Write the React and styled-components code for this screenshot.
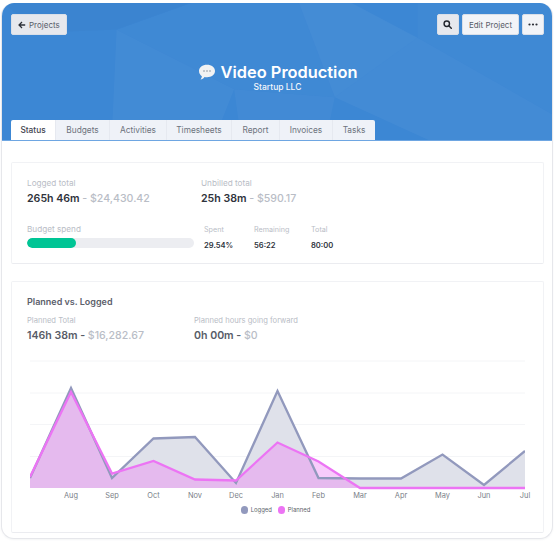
import React from "react";
import styled, { createGlobalStyle } from "styled-components";

const Global = createGlobalStyle`
  html, body { margin: 0; padding: 0; background: #fff; }
  body { font-family: "Inter", "Liberation Sans", sans-serif; }
  * { box-sizing: border-box; }
`;

const Page = styled.div`
  width: 556px;
  height: 553px;
  padding: 3px 3px 14px 1px;
`;

const Frame = styled.div`
  height: 536px;
  border: 1px solid #e6e7eb;
  border-top: 0;
  border-radius: 13px;
  overflow: hidden;
  display: flex;
  flex-direction: column;
  background: #fff;
  box-shadow: 0 1px 2px rgba(40, 50, 80, 0.05);
`;

const Header = styled.header`
  position: relative;
  height: 138px;
  flex: none;
  background: #3c87d4;
  display: flex;
  flex-direction: column;
  padding: 11px 8px 0 9px;
  border-bottom: 1px solid #6ea6e2;
`;

const Facets = styled.svg`
  position: absolute;
  inset: 0;
  width: 100%;
  height: 100%;
`;

const TopBar = styled.div`
  position: relative;
  display: flex;
  justify-content: space-between;
`;

const ButtonGroup = styled.div`
  display: flex;
  gap: 3px;
`;

const Button = styled.button`
  height: 21px;
  min-width: 22px;
  padding: 0 ${(p) => (p.$wide ? "6px" : "0")};
  display: flex;
  align-items: center;
  justify-content: center;
  gap: 3px;
  border: 1px solid #d9dfe8;
  border-radius: 2px;
  background: ${(p) => (p.$dim ? "#e6e8ed" : "#f2f4f8")};
  color: #585d68;
  font: 400 8px "Inter", sans-serif;
`;

const Titles = styled.div`
  position: relative;
  margin-top: 27px;
  display: flex;
  flex-direction: column;
  align-items: center;
`;

const TitleRow = styled.div`
  display: flex;
  align-items: center;
  gap: 5px;
  height: 20px;
`;

const Title = styled.h1`
  margin: 0;
  font: 600 16.4px "Inter", sans-serif;
  color: #fff;
`;

const Subtitle = styled.div`
  font: 500 8.5px "Inter", sans-serif;
  color: #f2f6fc;
`;

const Tabs = styled.nav`
  position: relative;
  margin-top: auto;
  display: flex;
  align-self: flex-start;
  height: 20px;
`;

const Tab = styled.div`
  width: ${(p) => p.$w}px;
  display: flex;
  align-items: center;
  justify-content: center;
  font: ${(p) => (p.$active ? 500 : 400)} 8.3px "Inter", sans-serif;
  color: ${(p) => (p.$active ? "#3f4450" : "#6d727d")};
  background: ${(p) => (p.$active ? "#fff" : "#eff2f8")};
  border-right: ${(p) => (p.$last ? "0" : "1px solid #e6e9f0")};
  &:first-child { border-radius: 2px 0 0 0; }
  &:last-child { border-radius: 0 2px 0 0; }
`;

const Body = styled.main`
  flex: 1;
  padding: 21px 8px 5px 9px;
  display: flex;
  flex-direction: column;
  gap: 17px;
`;

const Card = styled.section`
  border: 1px solid #f1f2f5;
  border-bottom-color: #ebecf0;
  border-radius: 2px;
  padding: ${(p) => p.$pad};
  flex: ${(p) => (p.$grow ? 1 : "none")};
  height: ${(p) => (p.$grow ? "auto" : "102px")};
`;

const Columns = styled.div`
  display: grid;
  grid-template-columns: ${(p) => p.$cols};
`;

const Label = styled.div`
  font: 400 ${(p) => p.$size || 8.2}px/10px "Inter", sans-serif;
  color: #b9bdc6;
`;

const BigValue = styled.div`
  margin-top: ${(p) => p.$mt ?? 4}px;
  font: 600 10.6px/14px "Inter", sans-serif;
  color: ${(p) => p.$color || "#2f333c"};
  white-space: nowrap;
`;

const Muted = styled.span`
  color: #b9bdc6;
  font-weight: 500;
`;

const BudgetRow = styled.div`
  margin-top: 18px;
  display: flex;
`;

const BudgetCol = styled.div`
  width: 177px;
`;

const Track = styled.div`
  margin-top: 4px;
  width: 167px;
  height: 10px;
  border-radius: 5px;
  background: #ecedf1;
  overflow: hidden;
`;

const Fill = styled.div`
  height: 100%;
  border-radius: 5px;
  background: #00c595;
`;

const Stat = styled.div`
  width: ${(p) => p.$w}px;
  padding-top: 1px;
`;

const SmallLabel = styled.div`
  font: 400 7.2px/10px "Inter", sans-serif;
  color: #b9bdc6;
`;

const SmallValue = styled.div`
  margin-top: 6px;
  font: 600 7.6px/10px "Inter", sans-serif;
  color: #30343d;
`;

const CardTitle = styled.h2`
  margin: 0 0 7px;
  font: 600 9px/12px "Inter", sans-serif;
  color: #5c606b;
  position: relative;
  top: -1px;
`;

const ChartSvg = styled.svg`
  display: block;
  margin: 12px 0 0 -16px;
`;

const Legend = styled.div`
  display: flex;
  justify-content: center;
  align-items: center;
  gap: 6px;
  margin: -1px 0 0 -4px;
  font: 400 5.9px/8px "Inter", sans-serif;
  color: #5b5f6a;
`;

const LegendItem = styled.div`
  display: flex;
  align-items: center;
  gap: 2.5px;
`;

const Dot = styled.i`
  width: 7.5px;
  height: 7.5px;
  border-radius: 50%;
  background: ${(p) => p.$color};
`;

const months = ["Aug", "Sep", "Oct", "Nov", "Dec", "Jan", "Feb", "Mar", "Apr", "May", "Jun", "Jul"];
const xs = [30, 71, 112, 153.5, 195, 236, 277.5, 318.5, 360, 401, 442.5, 484, 525];
const logged = [478, 388, 478, 438.5, 437, 483, 391, 478, 478.5, 478.5, 454.5, 485, 451];
const planned = [477, 392, 473.5, 461, 479.5, 480.5, 442.5, 461.5, 488, 488, 488, 488, 488];
const OX = 11;
const OY = 355;
const line = (v) => v.map((y, i) => `${xs[i] - OX},${y - OY}`).join(" ");
const area = (v) => `${xs[0] - OX},${488 - OY} ${line(v)} ${xs[12] - OX},${488 - OY}`;

const Chart = () => (
  <ChartSvg width="530" height="152" viewBox="0 0 530 152">
    <defs>
      <clipPath id="plot">
        <rect x={xs[0] - OX} y="0" width={xs[12] - xs[0]} height="152" />
      </clipPath>
    </defs>
    {[361, 393, 424.5, 456.5].map((y) => (
      <line key={y} x1={xs[0] - OX} x2={xs[12] - OX} y1={y - OY} y2={y - OY} stroke="#f4f5f7" strokeWidth="1" />
    ))}
    <g clipPath="url(#plot)">
      <polygon points={area(logged)} fill="#dfe1ea" />
      <polygon points={area(planned)} fill="rgb(237,127,245)" fillOpacity="0.4" />
      <polyline points={line(logged)} fill="none" stroke="#9299bd" strokeWidth="2.3" />
      <polyline points={line(planned)} fill="none" stroke="#ec74f4" strokeWidth="2.3" />
    </g>
    {months.map((m, i) => (
      <text key={m} x={xs[i + 1] - OX} y={498 - OY} textAnchor="middle" fontFamily="Inter, sans-serif" fontSize="7.4" fill="#7b7f89">
        {m}
      </text>
    ))}
  </ChartSvg>
);

const ArrowLeft = () => (
  <svg width="8" height="8" viewBox="0 0 10 10" fill="none" stroke="#2d3038" strokeWidth="1.6">
    <path d="M9 5H1.5M5 1.2 1.3 5 5 8.8" />
  </svg>
);

const SearchIcon = () => (
  <svg width="9" height="9" viewBox="0 0 10 10" fill="none" stroke="#23262d" strokeWidth="1.6">
    <circle cx="4.2" cy="4.2" r="3" />
    <path d="M6.4 6.4 9.2 9.2" strokeLinecap="round" />
  </svg>
);

const DotsIcon = () => (
  <svg width="10" height="3" viewBox="0 0 10 3" fill="#2d3038">
    <circle cx="1.5" cy="1.5" r="1.1" />
    <circle cx="5" cy="1.5" r="1.1" />
    <circle cx="8.5" cy="1.5" r="1.1" />
  </svg>
);

const BubbleIcon = () => (
  <svg width="18" height="17" viewBox="0 0 18 17">
    <path d="M9 .8c4.600 0 8 2.700 8 6.200s-3.400 6.200-8 6.200c-.9 0-1.700-.1-2.500-.3-.9 1.300-2.300 2.200-4 2.700.8-1 1.300-2 1.400-3.300C2.200 11.200 1 9.300 1 7 1 3.500 4.400.8 9 .8Z" fill="#f1f2f3" />
    <circle cx="6" cy="7" r=".8" fill="#8a8f98" />
    <circle cx="9" cy="7" r=".8" fill="#8a8f98" />
    <circle cx="12" cy="7" r=".8" fill="#8a8f98" />
  </svg>
);

const tabs = [
  ["Status", 45],
  ["Budgets", 54],
  ["Activities", 57],
  ["Timesheets", 65],
  ["Report", 48],
  ["Invoices", 53],
  ["Tasks", 42],
];

export default function App() {
  return (
    <>
      <Global />
      <Page>
        <Frame>
          <Header>
            <Facets viewBox="0 0 552 138" preserveAspectRatio="none">
              <polygon points="0,0 190,0 115,27 40,30" fill="#000" fillOpacity="0.015" />
              <polygon points="115,27 233,87 221,117 225,138 110,138" fill="#fff" fillOpacity="0.035" />
              <polygon points="115,27 190,0 298,0 334,95 233,87" fill="#fff" fillOpacity="0.02" />
              <polygon points="298,0 351,0 417,35 334,95" fill="#fff" fillOpacity="0.045" />
              <polygon points="417,35 552,112 552,138 428,138 334,95" fill="#fff" fillOpacity="0.04" />
              <polygon points="417,0 552,0 552,112 417,35" fill="#fff" fillOpacity="0.02" />
              <polygon points="233,87 334,95 325,138 240,138" fill="#fff" fillOpacity="0.03" />
            </Facets>
            <TopBar>
              <Button $wide $dim>
                <ArrowLeft />
                Projects
              </Button>
              <ButtonGroup>
                <Button $dim>
                  <SearchIcon />
                </Button>
                <Button $wide>Edit Project</Button>
                <Button>
                  <DotsIcon />
                </Button>
              </ButtonGroup>
            </TopBar>
            <Titles>
              <TitleRow>
                <BubbleIcon />
                <Title>Video Production</Title>
              </TitleRow>
              <Subtitle>Startup LLC</Subtitle>
            </Titles>
            <Tabs>
              {tabs.map(([t, w], i) => (
                <Tab key={t} $w={w} $active={i === 0} $last={i === tabs.length - 1}>
                  {t}
                </Tab>
              ))}
            </Tabs>
          </Header>
          <Body>
            <Card $pad="15px 15px 0">
              <Columns $cols="174px 1fr">
                <div>
                  <Label>Logged total</Label>
                  <BigValue>
                    265h 46m <Muted>- $24,430.42</Muted>
                  </BigValue>
                </div>
                <div>
                  <Label>Unbilled total</Label>
                  <BigValue>
                    25h 38m <Muted>- $590.17</Muted>
                  </BigValue>
                </div>
              </Columns>
              <BudgetRow>
                <BudgetCol>
                  <Label>Budget spend</Label>
                  <Track>
                    <Fill style={{ width: "29.54%" }} />
                  </Track>
                </BudgetCol>
                <Stat $w={50}>
                  <SmallLabel>Spent</SmallLabel>
                  <SmallValue>29.54%</SmallValue>
                </Stat>
                <Stat $w={57}>
                  <SmallLabel>Remaining</SmallLabel>
                  <SmallValue>56:22</SmallValue>
                </Stat>
                <Stat $w={50}>
                  <SmallLabel>Total</SmallLabel>
                  <SmallValue>80:00</SmallValue>
                </Stat>
              </BudgetRow>
            </Card>
            <Card $grow $pad="15px 15px 0">
              <CardTitle>Planned vs. Logged</CardTitle>
              <Columns $cols="167px 1fr">
                <div>
                  <Label $size={7.6}>Planned Total</Label>
                  <BigValue $color="#585c67" $mt={3}>
                    146h 38m - <Muted>$16,282.67</Muted>
                  </BigValue>
                </div>
                <div>
                  <Label $size={7.6}>Planned hours going forward</Label>
                  <BigValue $color="#585c67" $mt={3}>
                    0h 00m - <Muted>$0</Muted>
                  </BigValue>
                </div>
              </Columns>
              <Chart />
              <Legend>
                <LegendItem>
                  <Dot $color="#9299bd" />
                  Logged
                </LegendItem>
                <LegendItem>
                  <Dot $color="#ec74f4" />
                  Planned
                </LegendItem>
              </Legend>
            </Card>
          </Body>
        </Frame>
      </Page>
    </>
  );
}
